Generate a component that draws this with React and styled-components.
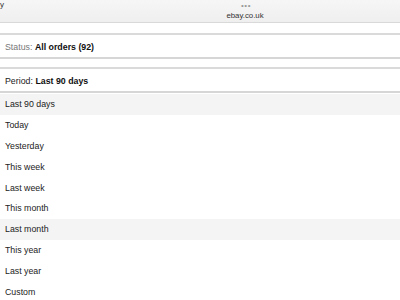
import React from "react";
import styled, { createGlobalStyle } from "styled-components";

const Global = createGlobalStyle`
  html, body { margin: 0; padding: 0; background: #fff; }
  body { font-family: "Liberation Sans", Arial, sans-serif; overflow: hidden; }
`;

const Page = styled.div`
  width: 400px;
  height: 300px;
  display: flex;
  flex-direction: column;
  overflow: hidden;
`;

const TopBar = styled.div`
  height: 23px;
  flex: none;
  position: relative;
  background: linear-gradient(#f6f6f6, #efefef);
  border-bottom: 1px solid #d9d9d9;
  display: flex;
  flex-direction: column;
  align-items: center;
  box-sizing: border-box;
`;

const Edge = styled.span`
  position: absolute;
  left: 0;
  top: 0;
  font-size: 8px;
  line-height: 10px;
  color: #333;
`;

const Dots = styled.div`
  margin-left: 92px;
  margin-top: 1px;
  font-size: 8px;
  letter-spacing: 0.5px;
  color: #9a9a9a;
  line-height: 9px;
`;

const Url = styled.div`
  margin-left: 90px;
  margin-top: 1px;
  font-size: 7.8px;
  color: #333;
  line-height: 9px;
`;

const Spacer = styled.div`
  height: ${p => p.h}px;
  flex: none;
`;

const FilterRow = styled.div`
  height: 21px;
  flex: none;
  border-top: 2px solid #dadada;
  border-bottom: 2px solid #d6d6d6;
  display: flex;
  align-items: center;
  padding-left: 5px;
  padding-top: 1px;
  font-size: 8.8px;
  color: #111;
`;

const Label = styled.span`
  color: ${p => (p.$muted ? "#777" : "#222")};
  margin-right: 2.5px;
`;

const Value = styled.b`
  font-weight: 700;
  color: #111;
`;

const List = styled.div`
  display: flex;
  flex-direction: column;
  margin-top: 1px;
`;

const Item = styled.div`
  height: 20.8px;
  flex: none;
  display: flex;
  align-items: center;
  padding-left: 5px;
  box-sizing: border-box;
  font-size: 8.8px;
  color: #222;
  background: ${p => (p.$active ? "#f4f4f4" : "#fff")};
`;

const items = [
  { t: "Last 90 days", a: true },
  { t: "Today" },
  { t: "Yesterday" },
  { t: "This week" },
  { t: "Last week" },
  { t: "This month" },
  { t: "Last month", a: true },
  { t: "This year" },
  { t: "Last year" },
  { t: "Custom" },
];

export default function App() {
  return (
    <Page>
      <Global />
      <TopBar>
        <Edge>y</Edge>
        <Dots>•••</Dots>
        <Url>ebay.co.uk</Url>
      </TopBar>
      <Spacer h={10} />
      <FilterRow>
        <Label $muted>Status:</Label>
        <Value>All orders (92)</Value>
      </FilterRow>
      <Spacer h={8} />
      <FilterRow>
        <Label>Period:</Label>
        <Value>Last 90 days</Value>
      </FilterRow>
      <List>
        {items.map(i => (
          <Item key={i.t} $active={i.a}>{i.t}</Item>
        ))}
      </List>
    </Page>
  );
}
